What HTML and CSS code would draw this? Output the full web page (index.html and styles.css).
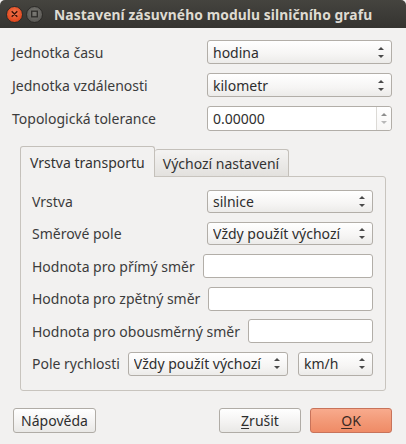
FILE: index.html
```html
<!DOCTYPE html>
<html lang="cs">
<head>
<meta charset="utf-8">
<link rel="stylesheet" href="styles.css">
</head>
<body>
<div class="window">
  <div class="titlebar">
    <span class="wbtn close"><svg width="16" height="16" viewBox="0 0 16 16"><path d="M5.5 5.5 L10.5 10.5 M10.5 5.5 L5.5 10.5" stroke="#3a1208" stroke-width="1.6" stroke-linecap="round"/></svg></span>
    <span class="wbtn max"><svg width="16" height="16" viewBox="0 0 16 16"><rect x="5" y="5" width="6" height="6" fill="none" stroke="#2e2d2a" stroke-width="1.4"/></svg></span>
    <span class="title">Nastavení zásuvného modulu silničního grafu</span>
  </div>
  <div class="content">
    <div class="form">
      <div class="row"><span class="label">Jednotka času</span><div class="combo wide"><span>hodina</span><i class="arrows"></i></div></div>
      <div class="row"><span class="label">Jednotka vzdálenosti</span><div class="combo wide"><span>kilometr</span><i class="arrows"></i></div></div>
      <div class="row"><span class="label">Topologická tolerance</span><div class="spin"><span class="spinval">0.00000</span><span class="spinbtn"><i class="arrows dim"></i></span></div></div>
    </div>
    <div class="tabs">
      <div class="tabbar">
        <div class="tab active">Vrstva transportu</div>
        <div class="tab">Výchozí nastavení</div>
      </div>
      <div class="pane">
        <div class="prow"><span class="label">Vrstva</span><div class="combo pc"><span>silnice</span><i class="arrows"></i></div></div>
        <div class="prow"><span class="label">Směrové pole</span><div class="combo pc"><span>Vždy použít výchozí</span><i class="arrows"></i></div></div>
        <div class="prow"><span class="label">Hodnota pro přímý směr</span><div class="input"></div></div>
        <div class="prow"><span class="label">Hodnota pro zpětný směr</span><div class="input"></div></div>
        <div class="prow"><span class="label">Hodnota pro obousměrný směr</span><div class="input"></div></div>
        <div class="prow"><span class="label">Pole rychlosti</span><div class="combo speed"><span>Vždy použít výchozí</span><i class="arrows"></i></div><div class="combo unit"><span>km/h</span><i class="arrows"></i></div></div>
      </div>
    </div>
    <div class="buttons">
      <button class="btn help">Nápověda</button>
      <span class="spacer"></span>
      <button class="btn cancel"><u>Z</u>rušit</button>
      <button class="btn ok"><u>O</u>K</button>
    </div>
  </div>
</div>
</body>
</html>
```

FILE: styles.css
```css
* { box-sizing: border-box; }
html, body { margin: 0; padding: 0; }
body {
  width: 406px;
  height: 444px;
  background: #f2f1f0;
  font-family: "Noto Sans", "DejaVu Sans", sans-serif;
  font-size: 14px;
  color: #3c3c3c;
  overflow: hidden;
}
.window { width: 406px; height: 444px; }
.titlebar {
  height: 28px;
  background: linear-gradient(#45443f, #3b3a36 60%, #353430);
  border-radius: 5px 5px 0 0;
  display: flex;
  align-items: center;
  padding-left: 6px;
}
.wbtn {
  width: 17px; height: 17px;
  border-radius: 50%;
  display: inline-flex;
  align-items: center;
  justify-content: center;
  margin-right: 3px;
}
.wbtn svg { display: block; }
.close {
  background: radial-gradient(circle at 50% 40%, #f47a52, #e0481e 70%, #c23b12);
  border: 1px solid #2c2b28;
}
.max {
  background: radial-gradient(circle at 50% 40%, #7b7a75, #5c5b57 70%, #4d4c48);
  border: 1px solid #2c2b28;
}
.title {
  margin-left: 8px;
  color: #dfdbd2;
  font-weight: bold;
  font-size: 13.8px;
  letter-spacing: 0.1px;
  white-space: nowrap;
}
.content { padding: 12px 14px 0 12px; }
.form { display: flex; flex-direction: column; gap: 9px; }
.row { display: flex; align-items: center; height: 24px; }
.row .label { width: 195px; flex: none; }
.combo {
  height: 24px;
  border: 1px solid #b2aea8;
  border-radius: 3px;
  background: linear-gradient(#ffffff, #f6f5f4 60%, #ecebe9);
  display: flex;
  align-items: center;
  padding-left: 5px;
  position: relative;
  color: #2e2e2e;
}
.combo span { flex: 1; white-space: nowrap; overflow: hidden; }
.combo.wide { width: 186px; }
.arrows {
  width: 7px; height: 11px;
  margin-right: 6px;
  position: relative;
  flex: none;
}
.arrows::before, .arrows::after {
  content: "";
  position: absolute;
  left: 0;
  border-left: 3px solid transparent;
  border-right: 3px solid transparent;
}
.arrows::before { top: 0; border-bottom: 3px solid #4a4a4a; }
.arrows::after { bottom: 0; border-top: 3px solid #4a4a4a; }
.arrows.dim::before { border-bottom-color: #8e8e8e; }
.arrows.dim::after { border-top-color: #b8b8b8; }
.spin {
  width: 186px; height: 25px;
  border: 1px solid #b2aea8;
  border-radius: 3px;
  background: #ffffff;
  display: flex;
  align-items: stretch;
}
.spinval { flex: 1; padding-left: 5px; display: flex; align-items: center; color: #2e2e2e; }
.spinbtn {
  width: 15px;
  border-left: 1px solid #dcdad6;
  display: flex; align-items: center; justify-content: center;
  background: linear-gradient(#ffffff, #f7f6f5);
  border-radius: 0 3px 3px 0;
}
.spinbtn .arrows { margin-right: 0; width: 6px; }
.tabs { margin: 16px 6px 0 8px; }
.tabbar { display: flex; align-items: flex-end; height: 30px; position: relative; z-index: 1; }
.tab {
  height: 27px;
  padding: 0 9px 0 8px;
  border: 1px solid #c4c0ba;
  border-bottom: none;
  border-radius: 3px 3px 0 0;
  background: linear-gradient(#f4f3f2, #e3e1de);
  display: flex; align-items: center;
  white-space: nowrap;
  color: #333;
}
.tab.active {
  background: #f2f1f0;
  padding: 0 9px 0 9px;
  margin-bottom: -1px;
  height: 31px;
}
.tab + .tab { border-left: none; }
.pane {
  border: 1px solid #c8c4be;
  border-radius: 0 3px 3px 3px;
  height: 215px;
  padding: 12px 12px 0 11px;
  display: flex; flex-direction: column; gap: 8.6px;
}
.prow { display: flex; align-items: center; height: 24px; }
.prow .label { white-space: nowrap; margin-right: 8px; }
.combo.pc { margin-left: auto; width: 166px; height: 23px; }
.input {
  flex: 1;
  height: 24px;
  border: 1px solid #b2aea8;
  border-radius: 3px;
  background: #ffffff;
}
.combo.speed { flex: 1; margin-left: 0; }
.combo.unit { width: 75px; margin-left: 10px; flex: none; }
.buttons { display: flex; align-items: center; margin-top: 17px; padding-right: 0; }
.spacer { flex: 1; }
.btn {
  font-family: inherit;
  font-size: 14px;
  height: 25px;
  border: 1px solid #b0aca6;
  border-radius: 3px;
  background: linear-gradient(#ffffff, #f3f2f1 60%, #e9e8e6);
  color: #2e2e2e;
  padding: 0;
  margin: 0;
}
.btn u { text-decoration-thickness: 1px; text-underline-offset: 2px; }
.help { width: 83px; margin-left: 1px; }
.cancel { width: 82px; }
.ok {
  width: 82px;
  margin-left: 9px;
  border-color: #c8735a;
  background: linear-gradient(#f8ab8d, #f39a78 50%, #ef8b66);
  color: #3a2a24;
}
```
